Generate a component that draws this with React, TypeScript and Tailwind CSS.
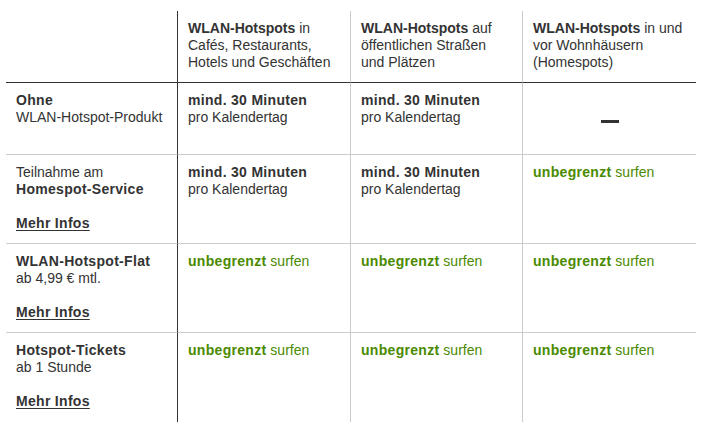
import React from 'react';

const GREEN = 'text-[#4a8a00]';

// body bold runs a touch wider in the original
const B = ({ children }: { children: React.ReactNode }) => (
  <b className="tracking-[0.3px]">{children}</b>
);

const Unlimited = () => (
  <span className={GREEN}>
    <B>unbegrenzt</B> surfen
  </span>
);

const Minutes = () => (
  <>
    <B>mind. 30 Minuten</B>
    <br />
    pro Kalendertag
  </>
);

const MoreInfo = () => (
  <a href="#" className="mt-[17px] block font-bold tracking-[0.3px] text-[#333] underline underline-offset-2">
    Mehr Infos
  </a>
);

interface Row {
  label: React.ReactNode;
  cells: React.ReactNode[];
  height: string;
}

const rows: Row[] = [
  {
    label: (
      <>
        <B>Ohne</B>
        <br />
        WLAN-Hotspot-Produkt
      </>
    ),
    cells: [
      <Minutes />,
      <Minutes />,
      <div className="mx-auto mt-[28px] h-[2.5px] w-[18px] bg-[#333]" />,
    ],
    height: 'h-[72px]',
  },
  {
    label: (
      <>
        Teilnahme am
        <br />
        <B>Homespot-Service</B>
        <MoreInfo />
      </>
    ),
    cells: [<Minutes />, <Minutes />, <Unlimited />],
    height: 'h-[89px]',
  },
  {
    label: (
      <>
        <B>WLAN-Hotspot-Flat</B>
        <br />
        ab 4,99 € mtl.
        <MoreInfo />
      </>
    ),
    cells: [<Unlimited />, <Unlimited />, <Unlimited />],
    height: 'h-[89px]',
  },
  {
    label: (
      <>
        <B>Hotspot-Tickets</B>
        <br />
        ab 1 Stunde
        <MoreInfo />
      </>
    ),
    cells: [<Unlimited />, <Unlimited />, <Unlimited />],
    height: 'h-[92px]',
  },
];

const headers: React.ReactNode[] = [
  <>
    <b>WLAN-Hotspots</b> in Cafés, Restaurants, Hotels und Geschäften
  </>,
  <>
    <b>WLAN-Hotspots</b> auf öffentlichen Straßen und Plätzen
  </>,
  <>
    <b>WLAN-Hotspots</b> in und vor Wohnhäusern (Homespots)
  </>,
];

// column borders: first divider is dark, the others light gray
const colBorder = ['border-l border-[#333]', 'border-l border-[#ccc]', 'border-l border-[#ccc]'];

export default function App() {
  return (
    <div className="min-h-[422px] bg-white pl-[6px] pt-[11px] font-['Liberation_Sans',Arial,sans-serif] text-[14px] leading-[17px] text-[#333]">
      <div className="grid w-[690px] grid-cols-[171px_173px_172px_174px]">
        {/* header */}
        <div className="h-[72px] border-b border-[#333]" />
        {headers.map((h, i) => (
          <div key={i} className={`h-[72px] border-b border-b-[#333] px-[10px] pt-[9px] ${colBorder[i]}`}>
            {h}
          </div>
        ))}

        {rows.map((row, r) => {
          const last = r === rows.length - 1;
          const bottom = last ? '' : 'border-b border-b-[#ccc]';
          return (
            <React.Fragment key={r}>
              <div className={`${row.height} ${bottom} px-[10px] pt-[9px]`}>{row.label}</div>
              {row.cells.map((c, i) => (
                <div key={i} className={`${row.height} ${bottom} px-[10px] pt-[9px] ${colBorder[i]}`}>
                  {c}
                </div>
              ))}
            </React.Fragment>
          );
        })}
      </div>
    </div>
  );
}
